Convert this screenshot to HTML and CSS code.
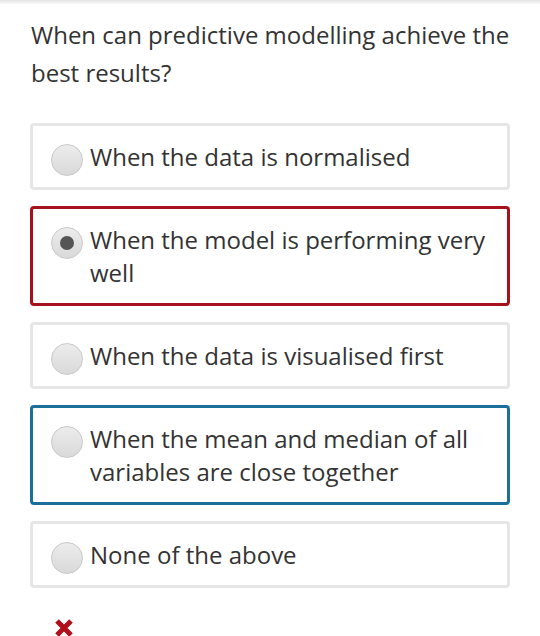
FILE: index.html
```html
<!DOCTYPE html>
<html>
<head>
<meta charset="utf-8">
<link rel="stylesheet" href="styles.css">
</head>
<body>
<div class="topbar"></div>
<div class="quiz">
  <p class="question">When can predictive modelling achieve the best results?</p>
  <div class="options">
    <div class="option"><span class="radio"></span><span class="label">When the data is normalised</span></div>
    <div class="option wrong"><span class="radio checked"></span><span class="label">When the model is performing very well</span></div>
    <div class="option"><span class="radio"></span><span class="label">When the data is visualised first</span></div>
    <div class="option correct"><span class="radio"></span><span class="label">When the mean and median of all variables are close together</span></div>
    <div class="option"><span class="radio"></span><span class="label">None of the above</span></div>
  </div>
  <div class="result">
    <svg width="20" height="20" viewBox="0 0 20 20"><path d="M3 3 L17 17 M17 3 L3 17" stroke="#b0101c" stroke-width="5" stroke-linecap="butt"/></svg>
  </div>
</div>
</body>
</html>
```
FILE: styles.css
```css
html, body { margin: 0; padding: 0; background: #fff; }
body { font-family: "Open Sans", "Noto Sans", sans-serif; color: #333; overflow: hidden; height: 636px; }
.topbar { height: 4px; background: linear-gradient(#e4e4e4, #fafafa); }
.quiz { padding: 0 30px 0 30px; }
.question { margin: 12px 0 31px 1px; font-size: 24px; line-height: 38px; color: #333; }
.options { display: flex; flex-direction: column; gap: 16px; }
.option {
  display: flex; align-items: flex-start; gap: 7px;
  border: 3px solid #e6e6e6; border-radius: 4px;
  padding: 14px 16px 14px 18px;
  font-size: 24px; line-height: 33px;
}
.option.wrong { border-color: #a5121e; }
.option.correct { border-color: #1a6f9b; }
.radio {
  flex: none; box-sizing: border-box; width: 32px; height: 32px; border-radius: 50%;
  border: 1px solid #c9c9c9;
  background: linear-gradient(#ececec, #d9d9d9);
  display: flex; align-items: center; justify-content: center;
  margin-top: 4px; margin-bottom: -4px;
}
.radio.checked::after {
  content: ""; width: 14px; height: 14px; border-radius: 50%; background: #555;
}
.label { color: #333; }
.result { padding: 30px 0 0 24px; }
.result svg { display: block; }
```
